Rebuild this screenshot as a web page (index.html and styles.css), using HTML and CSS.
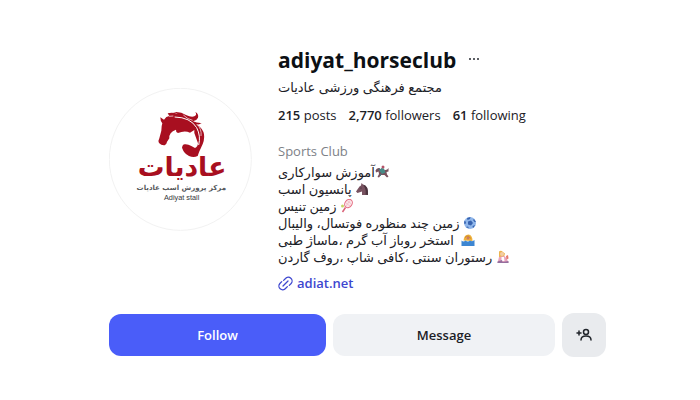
FILE: index.html
```html
<!DOCTYPE html>
<html lang="en">
<head>
<meta charset="utf-8">
<meta name="viewport" content="width=device-width, initial-scale=1">
<title>adiyat_horseclub</title>
<link rel="stylesheet" href="styles.css">
</head>
<body>
<main class="profile">
  <header class="top">
    <svg class="avatar" viewBox="27 25 429 429" role="img" aria-label="Adiyat stall logo">
      <circle cx="241" cy="239" r="213" fill="#fff" stroke="#f2f2f2" stroke-width="3"/>
      <path fill="#a80f20" d="M181 113L192 120Q198 110 208 109L203 101Q220 97 234 104Q226 97 218 98Q240 94 258 106Q273 113 283 110Q292 106 286 97Q297 103 294 114Q290 123 279 125Q292 131 305 130Q298 135 291 135Q309 146 312 164Q315 183 303 204Q297 216 293 229Q281 235 267 229Q248 220 244 196L222 178Q207 180 202 190L194 197Q184 198 177 190Q173 185 178 176L184 153Q184 139 187 131Q181 125 181 113Z"/>
      <path fill="#fff" d="M198 200Q200 184 208 176Q206 158 228 150Q227 158 234 160Q254 151 270 159L283 151Q281 161 287 171L294 191Q293 202 285 205L274 199Q264 193 254 194Q247 195 246 205L250 225L198 225Z"/>
      <path fill="none" stroke="#fff" stroke-width="3" d="M224 112Q271 113 290 144Q303 169 296 196"/>
      <path fill="none" stroke="#fff" stroke-width="2" d="M250 106Q263 119 278 122M290 133Q306 148 303 169M207 110L220 109"/>
      <text class="logo-name" x="246" y="288" text-anchor="middle">عادیات</text>
      <text class="logo-arabic" x="244" y="331" text-anchor="middle">مرکز پرورش اسب عادیات</text>
      <text class="logo-latin" x="245" y="361" text-anchor="middle">Adiyat stall</text>
    </svg>
    <section class="info">
      <div class="title-row">
        <h1>adiyat_horseclub</h1>
        <button class="more" type="button" aria-label="Options">
          <svg viewBox="0 0 12 4" width="12" height="4"><g fill="#262a30"><circle cx="2" cy="2" r="1"/><circle cx="6" cy="2" r="1"/><circle cx="10" cy="2" r="1"/></g></svg>
        </button>
      </div>
      <p class="name" dir="rtl" lang="fa">مجتمع فرهنگی ورزشی عادیات</p>
      <ul class="stats">
        <li><b>215</b> posts</li>
        <li><b>2,770</b> followers</li>
        <li><b>61</b> following</li>
      </ul>
      <p class="category">Sports Club</p>
      <div class="bio" dir="rtl" lang="fa">
        <p><svg class="emoji" viewBox="0 0 28 28"><path d="M1 11Q3 5 9 6L13 11L21 10Q25 10 27 6L27 13L23 14L24 19L27 23L24 25L19 20H12L8 25L5 24L8 18L7 13L2 15Z" fill="#79505c"/><path d="M8 11L13 6L18 7L21 15L14 18Z" fill="#478a86"/><circle cx="16" cy="4" r="3" fill="#b55369"/><path d="M7 8L11 10M12 18L10 22" stroke="#3d7b83" stroke-width="2"/></svg>آموزش سوارکاری</p>
        <p><svg class="emoji" viewBox="0 0 28 28"><path d="M2 19L9 9L12 7L13 2L17 6Q27 8 26 26H14L14 19L5 22Z" fill="#785260"/><path d="M16 5Q27 7 26 26L21 25Q23 15 16 5Z" fill="#4b343e"/><circle cx="12" cy="12" r="1" fill="#2c2026"/></svg> پانسیون اسب</p>
        <p><svg class="emoji" viewBox="0 0 28 28"><path d="M11 17L5 26" stroke="#d96278" stroke-width="3"/><ellipse cx="17" cy="9" rx="7" ry="9" transform="rotate(35 17 9)" fill="#fae4e8" stroke="#e56b80" stroke-width="2"/><path d="M12 8L20 14M15 4L23 10M20 3L12 14" stroke="#e9a6b0"/><circle cx="5" cy="14" r="3" fill="#c5d867"/></svg> زمین تنیس</p>
        <p><svg class="emoji" viewBox="0 0 28 28"><circle cx="14" cy="14" r="12" fill="#8fb6ea"/><path d="M10 11L16 9L20 14L16 19L10 17ZM8 4L15 2L14 6L9 8ZM22 6L26 12L23 12L20 8ZM25 18L20 24L19 20ZM12 25L6 22L10 21ZM2 15L3 9L6 12L5 16Z" fill="#3763b0"/></svg> زمین چند منظوره فوتسال، والیبال</p>
        <p><svg class="emoji" viewBox="0 0 28 28"><path d="M5 15Q6 3 15 3Q23 4 23 16Z" fill="#efb23c"/><circle cx="14" cy="10" r="3" fill="#ce7b63"/><path d="M8 9Q15 2 19 11" fill="none" stroke="#c9842f" stroke-width="2"/><path d="M1 15Q5 19 9 15Q14 19 18 15Q23 18 27 14V26H1Z" fill="#3d86d2"/></svg>&nbsp; استخر روباز آب گرم ،ماساژ طبی</p>
        <p><svg class="emoji" viewBox="0 0 28 28"><path d="M6 3Q10 0 14 4L18 7L16 14H6Z" fill="#edb44e"/><circle cx="12" cy="8" r="4" fill="#f3cda5"/><path d="M6 14L17 12L22 18L25 26H3Z" fill="#e9a3bd"/><path d="M11 14H16L17 22H11Z" fill="#fff"/><path d="M3 23L12 20L13 24L25 22V26H3Z" fill="#946f9e"/><path d="M20 12L24 10L25 17L21 19Z" fill="#e4786c"/></svg> رستوران سنتی ،کافی شاپ ،روف گاردن</p>
      </div>
      <a class="website" href="#">
        <svg viewBox="0 0 24 24" width="15" height="15" fill="none" stroke="currentColor" stroke-width="2" stroke-linecap="round"><path d="M8 16L16 8M9 7L12 4A6 6 0 0 1 21 12L18 15M6 9L3 12A6 6 0 0 0 12 20L15 17"/></svg>
        adiat.net
      </a>
    </section>
  </header>
  <div class="actions">
    <button class="btn follow" type="button">Follow</button>
    <button class="btn message" type="button">Message</button>
    <button class="btn add" type="button" aria-label="Similar accounts">
      <svg viewBox="0 0 16 14" width="16" height="14" fill="none" stroke="#20242a" stroke-width="1.5" stroke-linecap="round"><path d="M1 5H5M3 3V7M5 12Q5 8 10 8Q15 8 15 12"/><circle cx="10" cy="4" r="2.5"/></svg>
    </button>
  </div>
</main>
</body>
</html>
```
FILE: styles.css
```css
* { box-sizing: border-box; }
body {
  margin: 0;
  background: #fff;
  color: #1b2026;
  font: 13px/20px "Open Sans", "DejaVu Sans", sans-serif;
}
h1, p, ul { margin: 0; padding: 0; }
button { border: 0; padding: 0; font: inherit; color: inherit; }
.profile { padding: 44px 94px 24px 109px; }
.top { display: flex; align-items: flex-start; gap: 26px; }
.avatar { width: 143px; height: 143px; flex: none; margin-top: 44px; }
.logo-name { font: bold 80px "DejaVu Sans", sans-serif; fill: #a80f20; }
.logo-arabic { font: bold 21px "DejaVu Sans", sans-serif; fill: #55575b; }
.logo-latin { font: 22px "Liberation Sans", sans-serif; fill: #35373c; }
.info { flex: 1; min-width: 0; }
.title-row { display: flex; align-items: center; gap: 12px; }
h1 { font-size: 21px; line-height: 32px; font-weight: 700; color: #0c1014; }
.more { display: flex; padding: 0 0 3px; background: none; }
.name { text-align: left; line-height: 22px; }
.stats { display: flex; gap: 12px; margin-top: 7px; list-style: none; }
.stats b { font-weight: 600; }
.category { margin-top: 16px; color: #7d8187; }
.bio { margin-top: 3px; text-align: left; line-height: 17px; }
.bio p { height: 17px; white-space: nowrap; }
.emoji { width: 14px; height: 14px; vertical-align: -2px; }
.website {
  display: flex;
  width: max-content;
  align-items: center;
  gap: 4px;
  margin-top: 7px;
  color: #3d46cf;
  font-weight: 600;
  text-decoration: none;
}
.actions { display: flex; align-items: center; gap: 7px; margin-top: 20px; }
.btn { height: 42px; border-radius: 12px; font-weight: 600; }
.follow { flex: 217; background: #4a5df9; color: #fff; }
.message { flex: 222; background: #f0f2f5; }
.add { display: grid; place-items: center; width: 44px; height: 44px; background: #e9ebee; }
```
